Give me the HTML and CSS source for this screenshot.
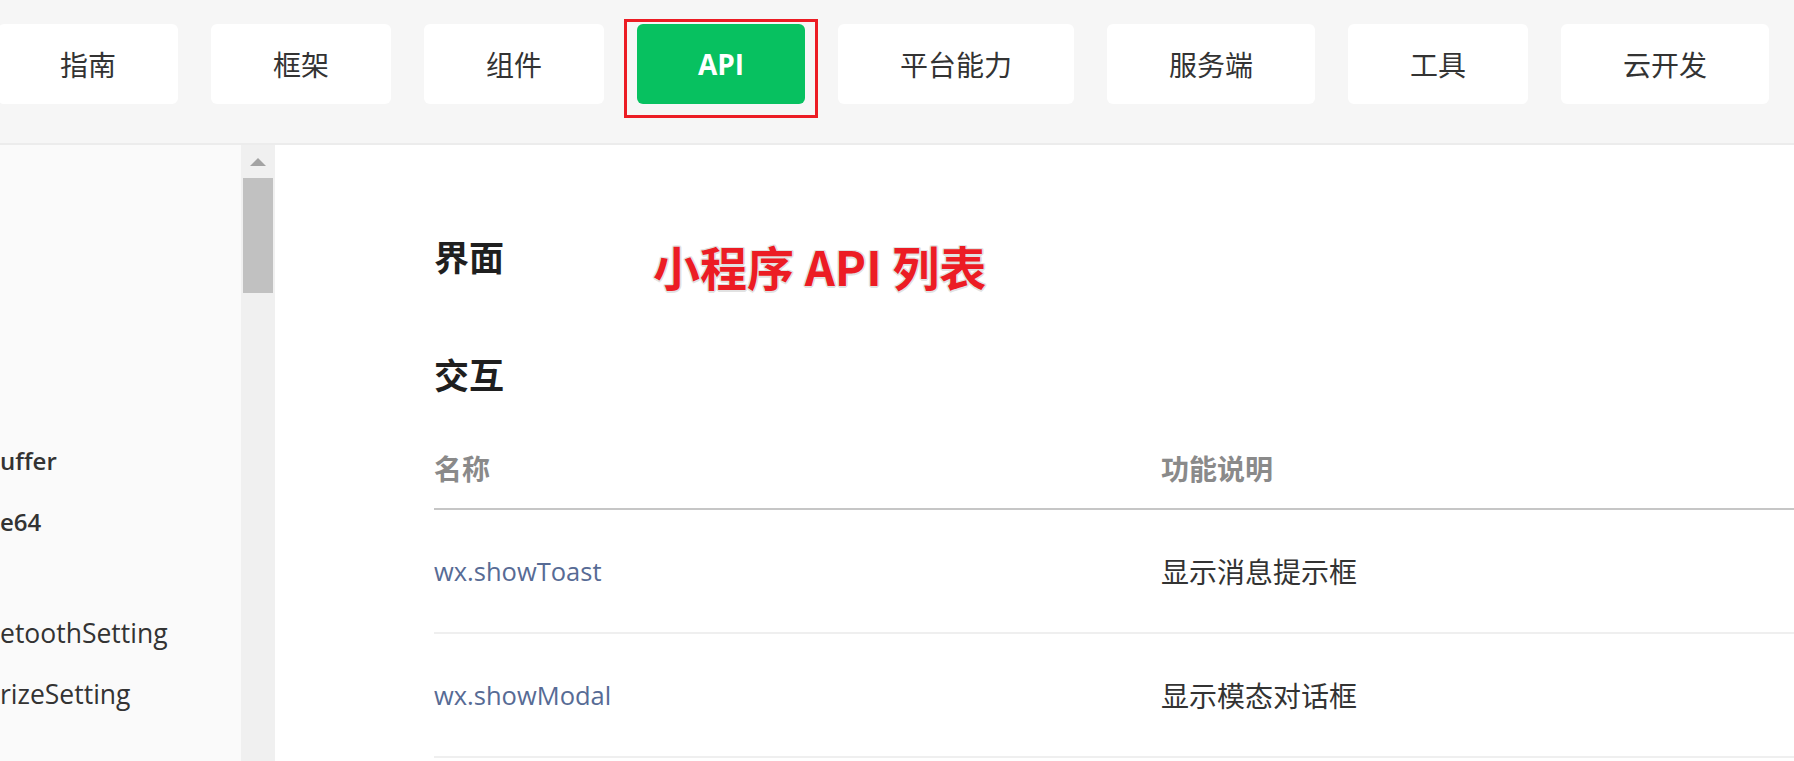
FILE: index.html
```html
<!DOCTYPE html>
<html lang="zh-CN">
<head>
<meta charset="utf-8">
<title>小程序 API 列表</title>
<link rel="stylesheet" href="styles.css">
</head>
<body>
<header class="topnav">
  <nav class="tabs">
    <a class="tab">指南</a>
    <a class="tab">框架</a>
    <a class="tab">组件</a>
    <a class="tab tab-active">API</a>
    <a class="tab">平台能力</a>
    <a class="tab">服务端</a>
    <a class="tab">工具</a>
    <a class="tab">云开发</a>
  </nav>
  <div class="focus-box"></div>
</header>
<div class="layout">
  <aside class="sidebar">
    <ul class="side-list">
      <li class="side-item side-strong">uffer</li>
      <li class="side-item side-strong">e64</li>
      <li class="side-spacer"></li>
      <li class="side-item">etoothSetting</li>
      <li class="side-item">rizeSetting</li>
    </ul>
  </aside>
  <div class="scrollbar">
    <span class="scroll-arrow"></span>
    <span class="scroll-thumb"></span>
  </div>
  <main class="content">
    <h2 class="section-title">界面</h2>
    <h2 class="section-title section-sub">交互</h2>
    <table class="api-table">
      <thead>
        <tr><th class="col-name">名称</th><th>功能说明</th></tr>
      </thead>
      <tbody>
        <tr><td class="col-name"><a class="api-link">wx.showToast</a></td><td>显示消息提示框</td></tr>
        <tr><td class="col-name"><a class="api-link">wx.showModal</a></td><td>显示模态对话框</td></tr>
      </tbody>
    </table>
    <div class="annotation">小程序 API 列表</div>
  </main>
</div>
</body>
</html>
```
FILE: styles.css
```css
* { box-sizing: border-box; }
html, body {
  margin: 0;
  padding: 0;
  width: 1794px;
  height: 761px;
  overflow: hidden;
  background: #ffffff;
  font-family: "Open Sans", "Noto Sans CJK SC", sans-serif;
  color: #333333;
}

.topnav {
  position: relative;
  height: 145px;
  background: #f6f6f6;
  border-bottom: 2px solid #ececec;
  padding-top: 24px;
}
.tabs {
  display: flex;
  gap: 33px;
  margin-left: -2px;
}
.tab {
  display: flex;
  align-items: center;
  justify-content: center;
  height: 80px;
  padding: 0 62px;
  background: #ffffff;
  border-radius: 6px;
  font-family: "Noto Sans CJK SC", sans-serif;
  font-size: 28px;
  color: #333333;
  white-space: nowrap;
}
.tab-active {
  width: 168px;
  padding: 0;
  background: #07c160;
  color: #ffffff;
  font-family: "Open Sans", "Noto Sans CJK SC", sans-serif;
  font-weight: 700;
  font-size: 28px;
}
.focus-box {
  position: absolute;
  left: 624px;
  top: 19px;
  width: 194px;
  height: 99px;
  border: 3px solid #ec1c24;
}

.layout {
  display: flex;
  height: 616px;
}
.sidebar {
  width: 241px;
  flex: none;
  background: #fafafa;
  overflow: hidden;
}
.side-list {
  list-style: none;
  margin: 0;
  padding: 285px 0 0 0;
}
.side-item {
  height: 61px;
  line-height: 61px;
  font-size: 26.5px;
  color: #333333;
  white-space: nowrap;
}
.side-strong {
  font-size: 24px;
  font-weight: 600;
}
.side-spacer { height: 51px; }

.scrollbar {
  width: 34px;
  flex: none;
  background: #f0f0f0;
  display: flex;
  flex-direction: column;
  align-items: center;
  padding-top: 13px;
}
.scroll-arrow {
  width: 0;
  height: 0;
  border-left: 8px solid transparent;
  border-right: 8px solid transparent;
  border-bottom: 8px solid #a3a3a3;
}
.scroll-thumb {
  margin-top: 12px;
  width: 30px;
  height: 115px;
  background: #c1c1c1;
}

.content {
  position: relative;
  flex: 1;
  overflow: hidden;
  padding: 86px 0 0 159px;
}
.section-title {
  margin: 0;
  height: 50px;
  line-height: 50px;
  font-family: "Noto Sans CJK SC", sans-serif;
  font-size: 35px;
  font-weight: 700;
  color: #1f1f1f;
}
.section-sub { margin-top: 68px; }

.api-table {
  margin-top: 29px;
  width: 1500px;
  border-collapse: collapse;
  font-family: "Noto Sans CJK SC", sans-serif;
  font-size: 28px;
}
.api-table th {
  text-align: left;
  font-weight: 700;
  color: #8a8a8a;
  height: 80px;
  line-height: 40px;
  padding: 20px 0;
  border-bottom: 2px solid #c6c6c6;
}
.api-table td {
  text-align: left;
  color: #333333;
  height: 124px;
  line-height: 40px;
  padding: 41px 0;
  border-bottom: 2px solid #efefef;
}
.col-name { width: 727px; }
.api-link {
  display: block;
  height: 40px;
  line-height: 40px;
  font-family: "Open Sans", sans-serif;
  font-size: 25.5px;
  color: #576b95;
}

.annotation {
  position: absolute;
  left: 378px;
  top: 97px;
  font-family: "Noto Sans CJK SC", sans-serif;
  font-size: 47px;
  line-height: 47px;
  font-weight: 700;
  color: #ec1c24;
  white-space: nowrap;
  text-shadow:
    1.5px 0 0 #e2e2e2, -1.5px 0 0 #e2e2e2,
    0 1.5px 0 #e2e2e2, 0 -1.5px 0 #e2e2e2,
    1px 1px 0 #e2e2e2, -1px -1px 0 #e2e2e2,
    1px -1px 0 #e2e2e2, -1px 1px 0 #e2e2e2;
}
```
